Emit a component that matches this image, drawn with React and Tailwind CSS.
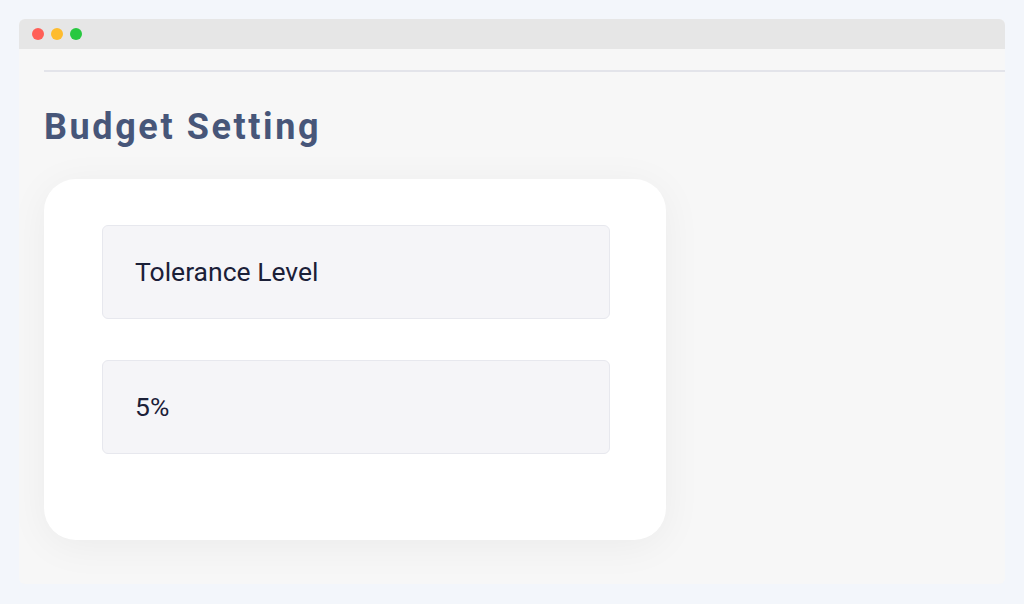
import React from 'react';

const Field = ({ text }) => (
    <div className="h-[94px] flex items-center pl-[32px] pr-[16px] bg-[#f5f5f8] border border-[#e7e8ee] rounded-[6px]">
        <span className="text-[26.5px] text-[#1b2038]">{text}</span>
    </div>
);

const App = () => {
    return (
        <div className="w-[1024px] h-[604px] bg-[#f3f6fb] pt-[19px] pl-[19px] font-['Roboto',sans-serif]">
            <div className="w-[986px] h-[565px] bg-[#f7f7f7] rounded-[6px] overflow-hidden flex flex-col">
                {/* window chrome */}
                <div className="h-[30px] bg-[#e6e6e6] flex items-center gap-[7px] pl-[13px]">
                    <span className="w-[12px] h-[12px] rounded-full bg-[#ff5f57]" />
                    <span className="w-[12px] h-[12px] rounded-full bg-[#febc2e]" />
                    <span className="w-[12px] h-[12px] rounded-full bg-[#28c840]" />
                </div>
                <div className="pl-[25px] pt-[21px]">
                    <div className="h-[2px] bg-[#e3e4ea]" />
                    <h1 className="mt-[33px] text-[36px] leading-[44px] font-bold tracking-[2.6px] text-[#475679]">Budget Setting</h1>
                    <div className="mt-[30px] w-[622px] h-[361px] bg-white rounded-[32px] shadow-[0_6px_40px_rgba(0,0,0,0.05)] pt-[46px] pl-[58px] pr-[56px] flex flex-col gap-[41px]">
                        <Field text="Tolerance Level" />
                        <Field text="5%" />
                    </div>
                </div>
            </div>
        </div>
    );
};

export default App;
